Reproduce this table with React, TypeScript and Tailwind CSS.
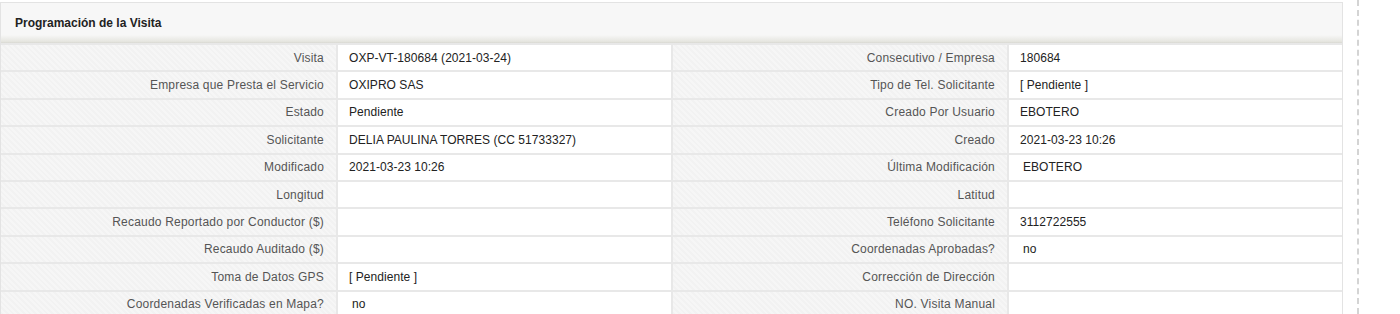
import React from 'react';

type Row = [string, string, string, string];

const rows: Row[] = [
  ['Visita', 'OXP-VT-180684 (2021-03-24)', 'Consecutivo / Empresa', '180684'],
  ['Empresa que Presta el Servicio', 'OXIPRO SAS', 'Tipo de Tel. Solicitante', '[ Pendiente ]'],
  ['Estado', 'Pendiente', 'Creado Por Usuario', 'EBOTERO'],
  ['Solicitante', 'DELIA PAULINA TORRES (CC 51733327)', 'Creado', '2021-03-23 10:26'],
  ['Modificado', '2021-03-23 10:26', 'Última Modificación', ' EBOTERO'],
  ['Longitud', '', 'Latitud', ''],
  ['Recaudo Reportado por Conductor ($)', '', 'Teléfono Solicitante', '3112722555'],
  ['Recaudo Auditado ($)', '', 'Coordenadas Aprobadas?', ' no'],
  ['Toma de Datos GPS', '[ Pendiente ]', 'Corrección de Dirección', ''],
  ['Coordenadas Verificadas en Mapa?', ' no', 'NO. Visita Manual', ''],
];

const Label = ({ text }: { text: string }) => (
  <div className="h-[25.4px] flex items-center justify-end pr-[12px] text-[12px] tracking-[0.2px] text-[#555] bg-[repeating-linear-gradient(45deg,#f6f6f6_0px,#f6f6f6_2px,#f2f2f2_2px,#f2f2f2_4px)] whitespace-nowrap">
    {text}
  </div>
);

const Value = ({ text }: { text: string }) => (
  <div
    className={`h-[25.4px] flex items-center text-[12px] tracking-[0.05px] text-[#222] bg-white whitespace-nowrap ${
      text.startsWith(' ') ? 'pl-[14px]' : 'pl-[11px]'
    }`}
  >
    {text.trim()}
  </div>
);

export default function App() {
  return (
    <div className="flex bg-white h-[314px] overflow-hidden" style={{ fontFamily: '"Liberation Sans", Arial, sans-serif' }}>
      <div className="w-[1343px] shrink-0 pt-[2px]">
        <div className="border border-[#e3e3e3] border-b-0">
          <div className="h-[40px] flex items-center pl-[14px] bg-[linear-gradient(to_bottom,#f7f7f7_0%,#f7f7f7_80%,#e6e6e0_96%,#d8d8d2_100%)] text-[12px] font-bold text-[#222]">
            Programación de la Visita
          </div>
          <div className="grid grid-cols-[335px_333px_334px_333px] gap-[2px] bg-[#e8e8e8] pt-[2px]">
            {rows.map((r, i) => (
              <React.Fragment key={i}>
                <Label text={r[0]} />
                <Value text={r[1]} />
                <Label text={r[2]} />
                <Value text={r[3]} />
              </React.Fragment>
            ))}
          </div>
        </div>
      </div>
      <div className="ml-[14px] w-0 border-l-2 border-dashed border-[#d4d4d4] h-full" />
    </div>
  );
}
